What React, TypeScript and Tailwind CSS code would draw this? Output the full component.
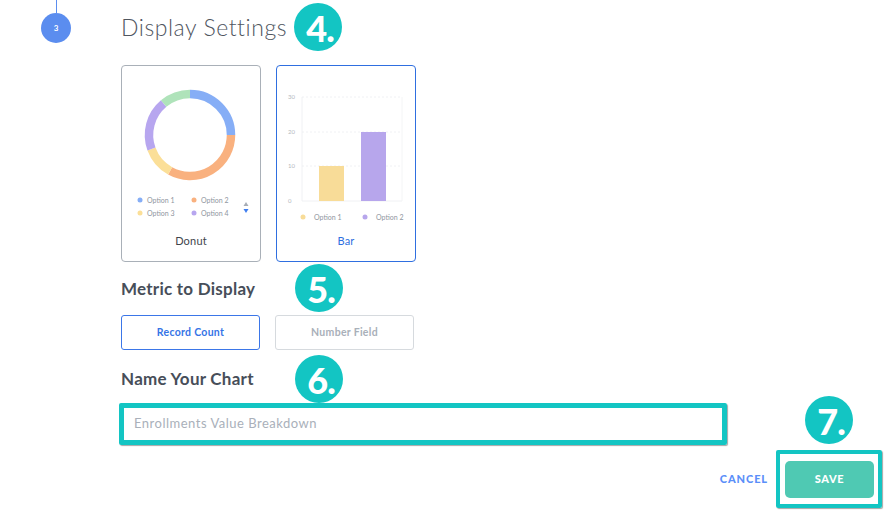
import React from 'react';

const donutSegments = [
  { from: 0, to: 90, color: '#86aef6' },
  { from: 90, to: 209, color: '#f9b17f' },
  { from: 209, to: 250, color: '#fbdf98' },
  { from: 250, to: 320, color: '#b7a6ef' },
  { from: 320, to: 360, color: '#afe3ba' },
];

// point on circle, angle measured clockwise from top
function pt(cx: number, cy: number, r: number, deg: number) {
  const a = ((deg - 90) * Math.PI) / 180;
  return [cx + r * Math.cos(a), cy + r * Math.sin(a)];
}

function arc(cx: number, cy: number, r: number, from: number, to: number) {
  const [x1, y1] = pt(cx, cy, r, from);
  const [x2, y2] = pt(cx, cy, r, to);
  const large = to - from > 180 ? 1 : 0;
  return `M ${x1} ${y1} A ${r} ${r} 0 ${large} 1 ${x2} ${y2}`;
}

function Badge({ n, className }: { n: string; className: string }) {
  return (
    <div
      className={`absolute w-[48px] h-[48px] rounded-full bg-[#13c5c3] flex items-center justify-center ${className}`}
    >
      <span className="text-white font-black text-[36px] leading-none font-['Lato',sans-serif] tracking-[-1px] mt-[2px] ml-[4px]">
        {n}
      </span>
    </div>
  );
}

function DonutCard() {
  return (
    <div className="w-[140px] h-[197px] border border-[#a9b0b8] rounded-[4px] flex flex-col items-center">
      <svg width="138" height="160" viewBox="0 0 138 160" className="block">
        {donutSegments.map((s) => (
          <path key={s.from} d={arc(68, 69, 41, s.from, s.to)} stroke={s.color} strokeWidth="8.5" fill="none" />
        ))}
        {[
          { x: 18, y: 134, c: '#86aef6', t: 'Option 1' },
          { x: 72, y: 134, c: '#f9b17f', t: 'Option 2' },
          { x: 18, y: 147, c: '#fbdf98', t: 'Option 3' },
          { x: 72, y: 147, c: '#b7a6ef', t: 'Option 4' },
        ].map((l) => (
          <g key={l.t}>
            <circle cx={l.x} cy={l.y} r="2.5" fill={l.c} />
            <text x={l.x + 7} y={l.y + 2.5} fontSize="7" fill="#8f96a0" fontFamily="Lato, sans-serif">
              {l.t}
            </text>
          </g>
        ))}
        <path d="M 124 136 L 126.5 140 L 121.5 140 Z" fill="#a7adb6" />
        <path d="M 121.5 143 L 126.5 143 L 124 147 Z" fill="#3f7ef0" />
      </svg>
      <div className="mt-[8px] text-[11px] leading-[14px] tracking-[0.2px] text-[#3f444c]">Donut</div>
    </div>
  );
}

function BarCard() {
  const grid = [
    { y: 31, t: '30' },
    { y: 66, t: '20' },
    { y: 100, t: '10' },
    { y: 135, t: '0' },
  ];
  return (
    <div className="w-[140px] h-[197px] border border-[#2f6fe0] rounded-[4px] flex flex-col items-center">
      <svg width="138" height="160" viewBox="0 0 138 160" className="block">
        {grid.map((g) => (
          <g key={g.t}>
            <text x="11" y={g.y + 2} fontSize="6" fill="#b4b9c0" fontFamily="Lato, sans-serif">
              {g.t}
            </text>
            <line
              x1="25"
              x2="125"
              y1={g.y}
              y2={g.y}
              stroke="#eceef1"
              strokeWidth="0.8"
              strokeDasharray={g.t === '0' ? undefined : '2 2'}
            />
          </g>
        ))}
        <line x1="25" x2="25" y1="31" y2="135" stroke="#eceef1" strokeWidth="0.8" />
        <line x1="125" x2="125" y1="31" y2="135" stroke="#f1f2f4" strokeWidth="0.8" />
        <rect x="42" y="100" width="25" height="35" fill="#f8dc98" />
        <rect x="84" y="66" width="25" height="69" fill="#b7a6ec" />
        <circle cx="26" cy="151" r="2.5" fill="#f8dc98" />
        <text x="37" y="153.5" fontSize="7" fill="#8f96a0" fontFamily="Lato, sans-serif">
          Option 1
        </text>
        <circle cx="88" cy="151" r="2.5" fill="#b7a6ec" />
        <text x="99" y="153.5" fontSize="7" fill="#8f96a0" fontFamily="Lato, sans-serif">
          Option 2
        </text>
      </svg>
      <div className="mt-[8px] text-[11px] leading-[14px] tracking-[0.2px] text-[#2f6fe0]">Bar</div>
    </div>
  );
}

export default function App() {
  return (
    <div className="w-[887px] h-[511px] bg-white relative overflow-hidden flex font-['Lato',sans-serif]">
      {/* Step rail */}
      <div className="w-[121px] shrink-0 pl-[41px] flex flex-col">
        <div className="ml-[15px] w-px h-[13px] bg-[#5b8def]" />
        <div className="w-[30px] h-[30px] rounded-full bg-[#5b8def] text-white text-[8px] font-bold flex items-center justify-center">
          3
        </div>
      </div>

      {/* Content */}
      <div className="flex-1 flex flex-col pr-[5px]">
        <h1 className="mt-[13px] text-[23px] leading-[28px] font-light tracking-[0.55px] text-[#50565f]">
          Display Settings
        </h1>

        <div className="mt-[24px] flex gap-[15px]">
          <DonutCard />
          <BarCard />
        </div>

        <h2 className="mt-[17px] text-[17px] leading-[20px] font-bold tracking-[0.25px] text-[#474e59]">
          Metric to Display
        </h2>
        <div className="mt-[16px] flex gap-[15px]">
          <button className="w-[139px] h-[35px] border border-[#3b76e8] rounded-[3px] text-[10.5px] font-bold tracking-[0.3px] text-[#3574e6]">
            Record Count
          </button>
          <button className="w-[139px] h-[35px] border border-[#d6dade] rounded-[3px] text-[10.5px] font-bold tracking-[0.3px] text-[#a9b0b9]">
            Number Field
          </button>
        </div>

        <h2 className="mt-[19px] text-[17px] leading-[20px] font-bold tracking-[0.25px] text-[#474e59]">
          Name Your Chart
        </h2>
        <div className="mt-[14px] -ml-[2px] w-[608px] h-[42px] border-[5px] border-[#13c5c3] rounded-[2px] shadow-[1px_1px_1px_rgba(0,0,0,0.35)] flex items-center pl-[10px]">
          <span className="text-[13px] tracking-[0.5px] text-[#a9b0ba]">Enrollments Value Breakdown</span>
        </div>

        <div className="mt-[5px] flex justify-end items-center gap-[8px]">
          <span className="text-[11px] font-black tracking-[0.9px] text-[#5b8ff9]">CANCEL</span>
          <div className="w-[106px] h-[58px] border-[4px] border-[#13c5c3] rounded-[2px] shadow-[1px_1px_1px_rgba(0,0,0,0.35)] pl-[5px] pr-[4px] pt-[7px]">
            <div className="h-[37px] rounded-[5px] bg-[#4fc9b3] text-white text-[11px] font-black tracking-[0.6px] flex items-center justify-center">
              SAVE
            </div>
          </div>
        </div>
      </div>

      <Badge n="4." className="left-[294px] top-[3px]" />
      <Badge n="5." className="left-[295px] top-[264px]" />
      <Badge n="6." className="left-[295px] top-[355px]" />
      <Badge n="7." className="left-[805px] top-[396px]" />
    </div>
  );
}
